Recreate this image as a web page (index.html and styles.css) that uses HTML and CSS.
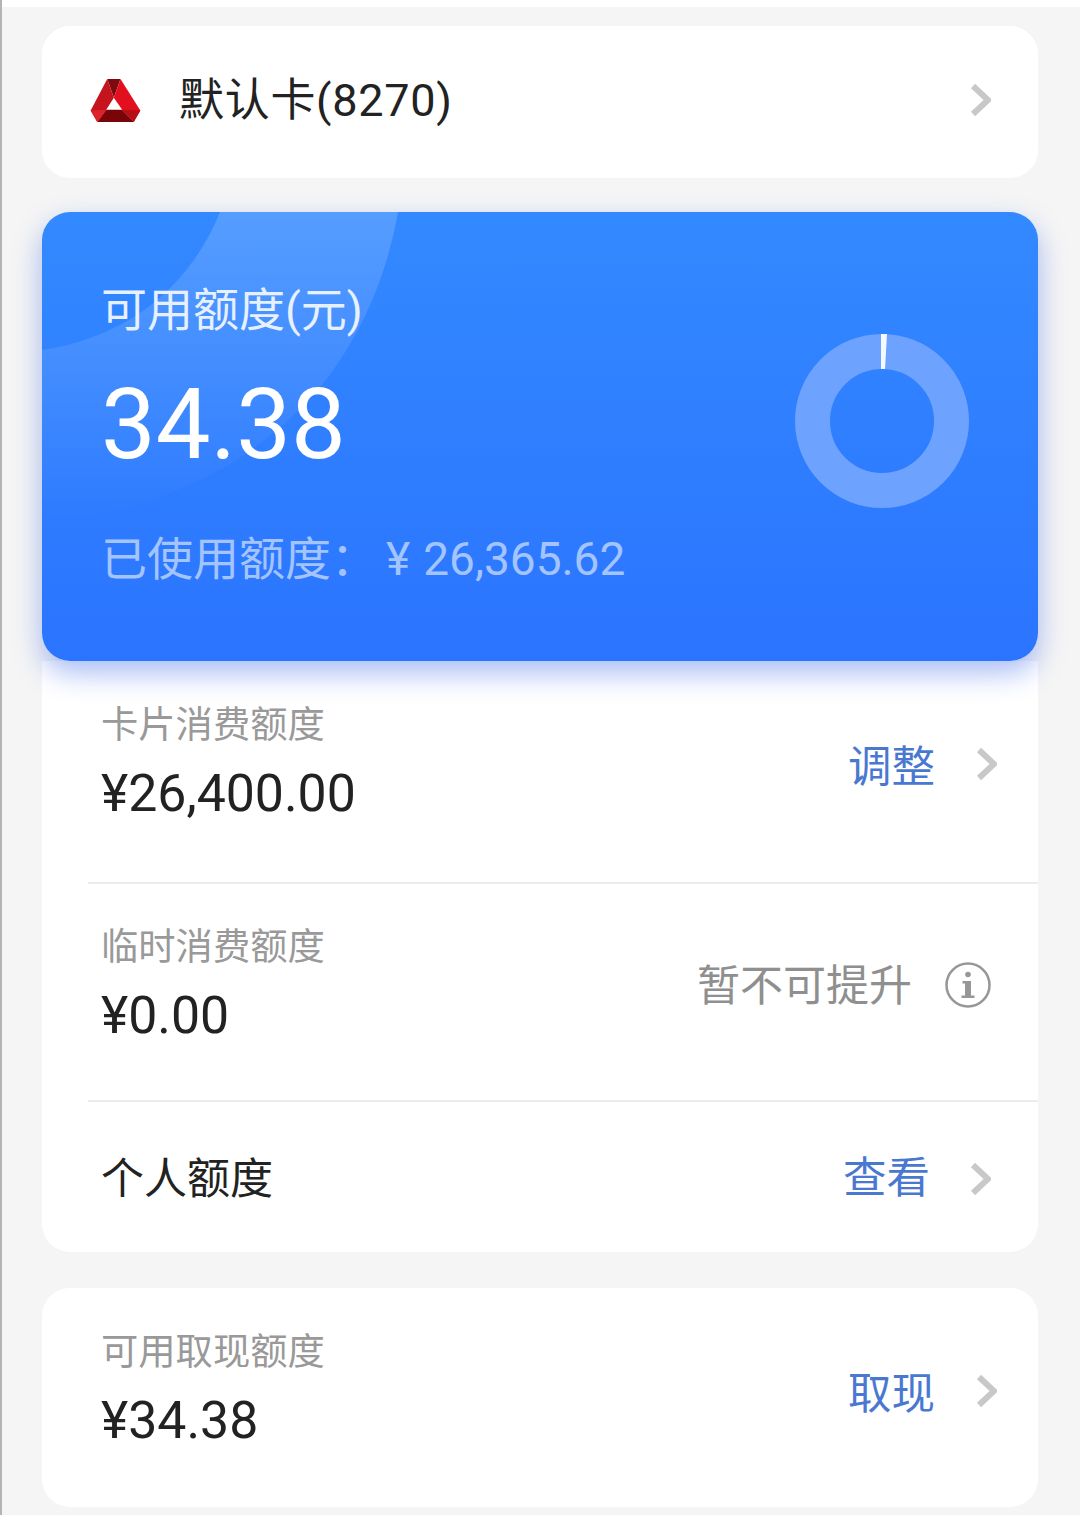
FILE: index.html
```html
<!DOCTYPE html>
<html lang="zh-CN">
<head>
    <meta charset="UTF-8">
    <meta name="viewport" content="width=device-width, initial-scale=1.0">
    <title>额度</title>
    <link rel="stylesheet" href="styles.css">
</head>
<body>
    <div class="top-strip"></div>

    <main class="page">
        <!-- 默认卡 -->
        <section class="card bank-card">
            <svg class="bank-logo" viewBox="60 50 160 140">
                <polygon points="115,55 155,55 135,112" fill="#7d0a10"/>
                <polygon points="115,55 135,112 112,148 85,185 65,150" fill="#c5141e"/>
                <polygon points="155,55 215,150 195,185 160,148 135,112" fill="#e2101f"/>
                <polygon points="112,148 160,148 195,185 85,185" fill="#7a0508"/>
                <polygon points="65,150 112,148 85,185" fill="#e0202a"/>
                <polygon points="215,150 160,148 195,185" fill="#b50f18"/>
            </svg>
            <span class="bank-name">默认卡(8270)</span>
            <svg class="chevron chevron-bank" viewBox="0 0 21 34"><path d="M3 3 L18 17 L3 31"/></svg>
        </section>

        <!-- 可用额度 -->
        <section class="quota-card">
            <svg class="quota-deco" viewBox="0 0 996 449">
                <defs>
                    <linearGradient id="decoFade" x1="0" y1="0" x2="0" y2="1">
                        <stop offset="0" stop-color="#fff" stop-opacity="0.17"/>
                        <stop offset="0.55" stop-color="#fff" stop-opacity="0.08"/>
                        <stop offset="1" stop-color="#fff" stop-opacity="0"/>
                    </linearGradient>
                </defs>
                <path d="M178 0 C150 70 90 125 0 138 L0 310 C130 300 230 240 290 160 C325 110 345 60 356 0 Z" fill="url(#decoFade)"/>
            </svg>
            <div class="quota-text">
                <div class="quota-label">可用额度(元)</div>
                <div class="quota-amount">34.38</div>
                <div class="quota-used"><span>已使用额度：</span><span class="used-yen">¥</span><span>26,365.62</span></div>
            </div>
            <svg class="quota-ring" viewBox="0 0 174 174">
                <circle cx="87" cy="87" r="69.5" fill="none" stroke="#6da2ff" stroke-width="35"/>
                <polygon points="86,0 92,0 90,35 86,35" fill="#f4f9ff"/>
            </svg>
        </section>

        <!-- 额度列表 -->
        <section class="limit-list">
            <div class="row row-card">
                <div class="row-text">
                    <div class="row-label">卡片消费额度</div>
                    <div class="row-amount">¥26,400.00</div>
                </div>
                <div class="row-action action-card">
                    <span class="link">调整</span>
                    <svg class="chevron" viewBox="0 0 21 34"><path d="M3 3 L18 17 L3 31"/></svg>
                </div>
            </div>
            <div class="row row-temp">
                <div class="row-text">
                    <div class="row-label">临时消费额度</div>
                    <div class="row-amount">¥0.00</div>
                </div>
                <div class="row-action action-temp">
                    <span class="muted">暂不可提升</span>
                    <svg class="info" viewBox="0 0 46 46">
                        <circle cx="23" cy="23" r="21.5" fill="none" stroke="#979797" stroke-width="2.5"/>
                        <circle cx="23" cy="12.5" r="2.8" fill="#979797"/>
                        <path d="M17.5 19 H26 V33.5 H29.5 V36 H16.5 V33.5 H20 V21.5 H17.5 Z" fill="#979797"/>
                    </svg>
                </div>
            </div>
            <div class="row row-personal">
                <div class="row-title">个人额度</div>
                <div class="row-action action-personal">
                    <span class="link">查看</span>
                    <svg class="chevron" viewBox="0 0 21 34"><path d="M3 3 L18 17 L3 31"/></svg>
                </div>
            </div>
        </section>

        <!-- 取现 -->
        <section class="card cash-card">
            <div class="row-text">
                <div class="row-label">可用取现额度</div>
                <div class="row-amount">¥34.38</div>
            </div>
            <div class="row-action action-card">
                <span class="link">取现</span>
                <svg class="chevron" viewBox="0 0 21 34"><path d="M3 3 L18 17 L3 31"/></svg>
            </div>
        </section>
    </main>
</body>
</html>
```

FILE: styles.css
```css
* {
    box-sizing: border-box;
    margin: 0;
    padding: 0;
}

body {
    width: 1080px;
    height: 1515px;
    overflow: hidden;
    background-color: #f5f5f5;
    border-left: 2px solid #b4b4b4;
    font-family: Roboto, "Noto Sans CJK SC", sans-serif;
    color: #222;
}

.top-strip {
    height: 7px;
    background-color: #fff;
}

.page {
    padding: 19px 42px 8px 40px;
}

.card {
    background-color: #fff;
    border-radius: 28px;
}

/* bank card */
.bank-card {
    display: flex;
    align-items: center;
    height: 152px;
    padding: 0 47px 0 47px;
}

.bank-logo {
    width: 53px;
    height: 47px;
    margin-right: 37px;
    margin-top: -4px;
}

.bank-name {
    flex: 1;
    font-size: 45px;
    line-height: 52px;
    letter-spacing: 0.7px;
    margin-top: -3px;
}

.chevron {
    display: block;
    width: 21px;
    height: 34px;
    fill: none;
    stroke: #c8c8c8;
    stroke-width: 6;
}

.chevron-bank {
    margin-top: -4px;
}

/* blue quota card */
.quota-card {
    position: relative;
    z-index: 1;
    display: flex;
    justify-content: space-between;
    align-items: flex-start;
    height: 449px;
    margin-top: 34px;
    padding: 72px 69px 0 59px;
    overflow: hidden;
    border-radius: 28px;
    background: linear-gradient(180deg, #3389ff 0%, #2b74ff 100%);
    box-shadow: 0 12px 28px rgba(43, 90, 230, 0.4);
    color: #fff;
}

.quota-deco {
    position: absolute;
    left: 0;
    top: 0;
    width: 996px;
    height: 449px;
}

.quota-text {
    position: relative;
}

.quota-label {
    font-size: 46px;
    line-height: 52px;
    color: #e6f0ff;
}

.quota-amount {
    margin-top: 34px;
    font-size: 97.5px;
    line-height: 110px;
}

.quota-used {
    display: flex;
    margin-top: 53px;
    font-size: 46px;
    line-height: 52px;
    color: #a3c4ff;
}

.used-yen {
    margin-left: 9px;
    margin-right: 13px;
}

.quota-ring {
    position: relative;
    width: 174px;
    height: 174px;
    margin-top: 50px;
}

/* limit rows */
.limit-list {
    background-color: #fff;
    border-radius: 0 0 28px 28px;
}

.row {
    display: flex;
    justify-content: space-between;
    align-items: center;
    margin-left: 46px;
    padding-left: 13px;
}

.row-card {
    padding-top: 42px;
    padding-bottom: 58px;
    border-bottom: 2px solid #ececec;
}

.row-temp {
    padding-top: 41px;
    padding-bottom: 54px;
    border-bottom: 2px solid #ececec;
}

.row-personal {
    height: 150px;
}

.row-label {
    font-size: 37.3px;
    line-height: 44px;
    color: #999;
}

.row-amount {
    margin-top: 17px;
    font-size: 51.8px;
    line-height: 60px;
}

.row-title {
    font-size: 43px;
    line-height: 50px;
    margin-top: 4px;
}

.row-action {
    display: flex;
    align-items: center;
}

.action-card {
    gap: 41px;
    padding-right: 41px;
    margin-top: 8px;
}

.action-card .chevron {
    margin-bottom: 8px;
}

.action-temp {
    gap: 33px;
    padding-right: 47px;
}

.action-temp .info {
    margin-bottom: 2px;
}

.action-personal {
    gap: 40px;
    padding-right: 47px;
    margin-top: 4px;
}

.link {
    font-size: 43.5px;
    line-height: 50px;
    color: #4a78d0;
}

.muted {
    font-size: 43px;
    line-height: 50px;
    color: #8f8f8f;
}

.info {
    display: block;
    width: 46px;
    height: 46px;
}

/* cash card */
.cash-card {
    display: flex;
    justify-content: space-between;
    align-items: center;
    margin-top: 36px;
    padding: 42px 0 56px 59px;
}
```
